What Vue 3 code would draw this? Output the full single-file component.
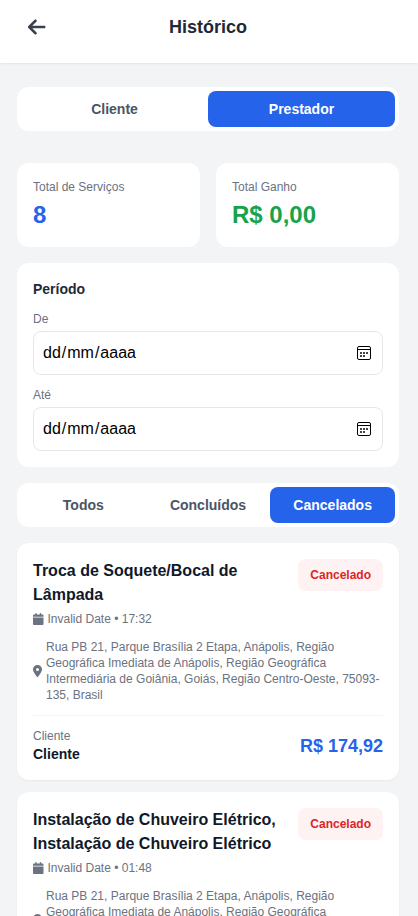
<script setup>
import { ref } from 'vue'

const roles = ['Cliente', 'Prestador']
const role = ref('Prestador')
const filters = ['Todos', 'Concluídos', 'Cancelados']
const filter = ref('Cancelados')
const dateFields = ['De', 'Até']
const address =
  'Rua PB 21, Parque Brasília 2 Etapa, Anápolis, Região Geográfica Imediata de Anápolis, Região Geográfica Intermediária de Goiânia, Goiás, Região Centro-Oeste, 75093-135, Brasil'
const services = [
  { title: 'Troca de Soquete/Bocal de Lâmpada', time: '17:32', price: 'R$ 174,92' },
  { title: 'Instalação de Chuveiro Elétrico, Instalação de Chuveiro Elétrico', time: '01:48', price: 'R$ 174,92' },
]
</script>

<template>
  <div class="page">
    <header class="header">
      <button class="back" aria-label="Voltar">
        <svg viewBox="0 0 448 512" width="17.5" height="20" fill="currentColor">
          <path d="M9.4 233.4c-12.500 12.500-12.500 32.800 0 45.300l160 160c12.500 12.500 32.800 12.500 45.300 0s12.500-32.800 0-45.300L109.200 288 416 288c17.700 0 32-14.300 32-32s-14.300-32-32-32l-306.700 0L214.600 118.600c12.500-12.500 12.500-32.800 0-45.300s-32.800-12.500-45.300 0l-160 160z" />
        </svg>
      </button>
      <h1>Histórico</h1>
    </header>

    <main class="content">
      <div class="tabs roles">
        <button v-for="r in roles" :key="r" :class="{ active: r === role }" @click="role = r">{{ r }}</button>
      </div>

      <div class="stats">
        <div class="panel">
          <div class="label">Total de Serviços</div>
          <div class="value blue">8</div>
        </div>
        <div class="panel">
          <div class="label">Total Ganho</div>
          <div class="value green">R$ 0,00</div>
        </div>
      </div>

      <section class="panel period">
        <h2>Período</h2>
        <div v-for="f in dateFields" :key="f" class="field">
          <div class="label">{{ f }}</div>
          <div class="date-input">
            <div class="mask"><span>dd</span>/<span>mm</span>/<span>aaaa</span></div>
            <svg width="14" height="14" viewBox="0 0 14 14">
              <rect x="0.5" y="0.5" width="13" height="13" rx="1.5" fill="none" stroke="#000" />
              <path d="M1 3.500H13" stroke="#000" />
              <path d="M3 6h2v2H3zM6 6h2v2H6zM9 6h2v2H9zM3 9h2v2H3zM6 9h2v2H6z" fill="#444" />
            </svg>
          </div>
        </div>
      </section>

      <div class="tabs">
        <button v-for="f in filters" :key="f" :class="{ active: f === filter }" @click="filter = f">{{ f }}</button>
      </div>

      <div class="services">
        <article v-for="s in services" :key="s.title" class="panel service">
          <div class="top">
            <div class="info">
              <h3>{{ s.title }}</h3>
              <div class="meta">
                <svg viewBox="0 0 448 512" width="10.5" height="12" fill="currentColor">
                  <path d="M96 32V64H48C21.500 64 0 85.500 0 112v48H448V112c0-26.500-21.500-48-48-48H352V32c0-17.700-14.300-32-32-32s-32 14.300-32 32V64H160V32c0-17.700-14.300-32-32-32S96 14.300 96 32zM448 192H0V464c0 26.500 21.500 48 48 48H400c26.500 0 48-21.500 48-48V192z" />
                </svg>
                <span>Invalid Date • {{ s.time }}</span>
              </div>
            </div>
            <span class="badge">Cancelado</span>
          </div>
          <div class="meta address">
            <svg viewBox="0 0 384 512" width="9" height="12" fill="currentColor">
              <path d="M215.700 499.200C267 435 384 279.400 384 192C384 86 298 0 192 0S0 86 0 192c0 87.400 117 243 168.300 307.200c12.300 15.300 35.100 15.300 47.400 0zM192 128a64 64 0 1 1 0 128 64 64 0 1 1 0-128z" />
            </svg>
            <span>{{ address }}</span>
          </div>
          <footer class="bottom">
            <div>
              <div class="label">Cliente</div>
              <div class="client">Cliente</div>
            </div>
            <div class="price">{{ s.price }}</div>
          </footer>
        </article>
      </div>
    </main>
  </div>
</template>

<style>
body {
  background: #f3f4f6;
}
</style>

<style scoped>
* {
  box-sizing: border-box;
  margin: 0;
}
.page {
  height: 100vh;
  overflow: hidden;
  background: #f3f4f6;
  color: #111827;
  font-family: "Liberation Sans", Arial, sans-serif;
}
svg {
  display: block;
  flex: none;
}
button {
  border: 0;
  padding: 0;
  background: none;
  font: inherit;
}
.header {
  display: grid;
  grid-template-columns: 40px 1fr 40px;
  align-items: start;
  height: 63px;
  padding: 13px 19px 0 17px;
  background: #fff;
  box-shadow: 0 1px 2px rgba(0, 0, 0, 0.07);
}
.back {
  display: flex;
  align-items: center;
  justify-content: center;
  height: 28px;
  color: #374151;
}
h1 {
  font-size: 18px;
  line-height: 28px;
  text-align: center;
  color: #1f2937;
}
.content {
  display: flex;
  flex-direction: column;
  gap: 16px;
  padding: 24px 19px 16px 17px;
}
.tabs {
  display: grid;
  grid-auto-flow: column;
  grid-auto-columns: 1fr;
  padding: 4px;
  background: #fff;
  border-radius: 12px;
}
.roles {
  margin-bottom: 16px;
}
.tabs button {
  height: 36px;
  border-radius: 8px;
  color: #4b5563;
  font-size: 14px;
  font-weight: 700;
  line-height: 20px;
}
.tabs button.active {
  background: #2563eb;
  color: #fff;
}
.stats {
  display: grid;
  grid-template-columns: 1fr 1fr;
  gap: 16px;
}
.panel {
  padding: 16px;
  background: #fff;
  border-radius: 12px;
}
.label {
  color: #6b7280;
  font-size: 12px;
  line-height: 16px;
}
.value {
  margin-top: 4px;
  font-size: 24px;
  font-weight: 700;
  line-height: 32px;
}
.blue {
  color: #2563eb;
}
.green {
  color: #16a34a;
}
.period {
  display: flex;
  flex-direction: column;
  gap: 12px;
}
h2 {
  color: #1f2937;
  font-size: 14px;
  line-height: 20px;
}
.date-input {
  display: flex;
  align-items: center;
  justify-content: space-between;
  height: 44px;
  margin-top: 4px;
  padding: 0 11px 0 8px;
  border: 1px solid #e5e7eb;
  border-radius: 8px;
  color: #000;
}
.mask {
  font-size: 16px;
  line-height: 24px;
}
.mask span {
  padding: 0 1px;
}
.services {
  display: flex;
  flex-direction: column;
  gap: 12px;
}
.service {
  box-shadow: 0 1px 2px rgba(0, 0, 0, 0.05);
}
.top {
  display: flex;
  align-items: flex-start;
  justify-content: space-between;
}
.info {
  flex: 1;
}
h3 {
  font-size: 16px;
  line-height: 24px;
}
.meta {
  display: flex;
  align-items: center;
  gap: 4px;
  margin-top: 4px;
  color: #6b7280;
  font-size: 12px;
  line-height: 16px;
}
.address {
  margin-top: 12px;
}
.badge {
  padding: 8px 12px;
  border-radius: 8px;
  background: #fef2f2;
  color: #dc2626;
  font-size: 12px;
  font-weight: 700;
  line-height: 16px;
}
.bottom {
  display: flex;
  align-items: center;
  justify-content: space-between;
  margin-top: 12px;
  padding-top: 12px;
  border-top: 1px solid #f3f4f6;
}
.client {
  font-size: 14px;
  font-weight: 700;
  line-height: 20px;
}
.price {
  color: #2563eb;
  font-size: 18px;
  font-weight: 700;
  line-height: 28px;
}
</style>
